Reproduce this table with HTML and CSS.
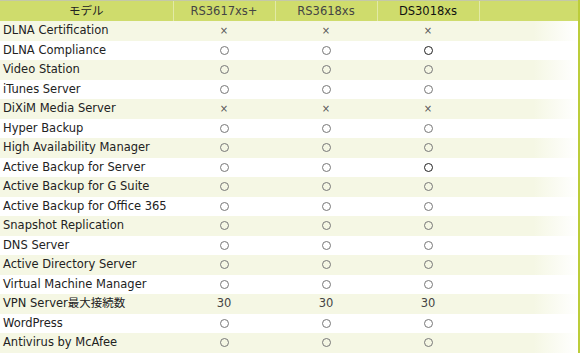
FILE: index.html
```html
<!DOCTYPE html>
<html lang="ja">
<head>
<meta charset="utf-8">
<link rel="stylesheet" href="styles.css">
</head>
<body>
<div class="wrap">
<table class="spec">
<colgroup><col class="c-name"><col class="c-m"><col class="c-m"><col class="c-m"><col></colgroup>
<thead>
<tr><th>モデル</th><th>RS3617xs+</th><th>RS3618xs</th><th class="dark">DS3018xs</th><th></th></tr>
</thead>
<tbody>
<tr><td>DLNA Certification</td><td><span class="x">×</span></td><td><span class="x">×</span></td><td><span class="x">×</span></td><td></td></tr>
<tr><td>DLNA Compliance</td><td><span class="o"></span></td><td><span class="o"></span></td><td><span class="o dk"></span></td><td></td></tr>
<tr><td>Video Station</td><td><span class="o"></span></td><td><span class="o"></span></td><td><span class="o"></span></td><td></td></tr>
<tr><td>iTunes Server</td><td><span class="o"></span></td><td><span class="o"></span></td><td><span class="o"></span></td><td></td></tr>
<tr><td>DiXiM Media Server</td><td><span class="x">×</span></td><td><span class="x">×</span></td><td><span class="x">×</span></td><td></td></tr>
<tr><td>Hyper Backup</td><td><span class="o"></span></td><td><span class="o"></span></td><td><span class="o"></span></td><td></td></tr>
<tr><td>High Availability Manager</td><td><span class="o"></span></td><td><span class="o"></span></td><td><span class="o"></span></td><td></td></tr>
<tr><td>Active Backup for Server</td><td><span class="o"></span></td><td><span class="o"></span></td><td><span class="o dk"></span></td><td></td></tr>
<tr><td>Active Backup for G Suite</td><td><span class="o"></span></td><td><span class="o"></span></td><td><span class="o"></span></td><td></td></tr>
<tr><td>Active Backup for Office 365</td><td><span class="o"></span></td><td><span class="o"></span></td><td><span class="o"></span></td><td></td></tr>
<tr><td>Snapshot Replication</td><td><span class="o"></span></td><td><span class="o"></span></td><td><span class="o"></span></td><td></td></tr>
<tr><td>DNS Server</td><td><span class="o"></span></td><td><span class="o"></span></td><td><span class="o"></span></td><td></td></tr>
<tr><td>Active Directory Server</td><td><span class="o"></span></td><td><span class="o"></span></td><td><span class="o"></span></td><td></td></tr>
<tr><td>Virtual Machine Manager</td><td><span class="o"></span></td><td><span class="o"></span></td><td><span class="o"></span></td><td></td></tr>
<tr><td>VPN Server最大接続数</td><td>30</td><td>30</td><td>30</td><td></td></tr>
<tr><td>WordPress</td><td><span class="o"></span></td><td><span class="o"></span></td><td><span class="o"></span></td><td></td></tr>
<tr><td>Antivirus by McAfee</td><td><span class="o"></span></td><td><span class="o"></span></td><td><span class="o"></span></td><td></td></tr>
</tbody>
</table>
</div>
</body>
</html>
```
FILE: styles.css
```css
html, body { margin: 0; padding: 0; background: #fff; }
body { font-family: "DejaVu Sans", "Noto Sans CJK JP", sans-serif; font-size: 11.5px; color: #333; }
.wrap {
  width: 578px;
  border-right: 2px solid #bccd3a;
  border-bottom: 2px solid #bccd3a;
}
.spec { width: 578px; border-collapse: collapse; table-layout: fixed; }
.c-name { width: 173px; }
.c-m { width: 102px; }
.spec th {
  height: 20px; padding: 0;
  background: #cfdc6c;
  border-top: 1px solid #c4c8a8;
  border-left: 1px solid #e2eaa6;
  font-weight: normal; color: #444; text-align: center;
  font-size: 11.5px; line-height: 19px;
}
.spec th:first-child { border-left: none; color: #222; }
.spec th.dark { color: #111; }
.spec td {
  height: 19.5px; padding: 0; text-align: center;
  line-height: 19.5px; color: #444; white-space: nowrap;
}
.spec td:first-child { text-align: left; padding-left: 3px; color: #222; }
.spec tbody tr:nth-child(odd) td { background: #f5f7e4; }
.spec tbody tr:nth-child(odd) td:last-child { background: linear-gradient(to right, #f5f7e4 55%, #fff 100%); }
.o {
  display: inline-block; width: 9px; height: 9px; box-sizing: border-box;
  border: 1px solid #777; border-radius: 50%; vertical-align: -1px;
}
.o.dk { border-color: #222; }
.x { font-size: 10px; color: #555; }
```
